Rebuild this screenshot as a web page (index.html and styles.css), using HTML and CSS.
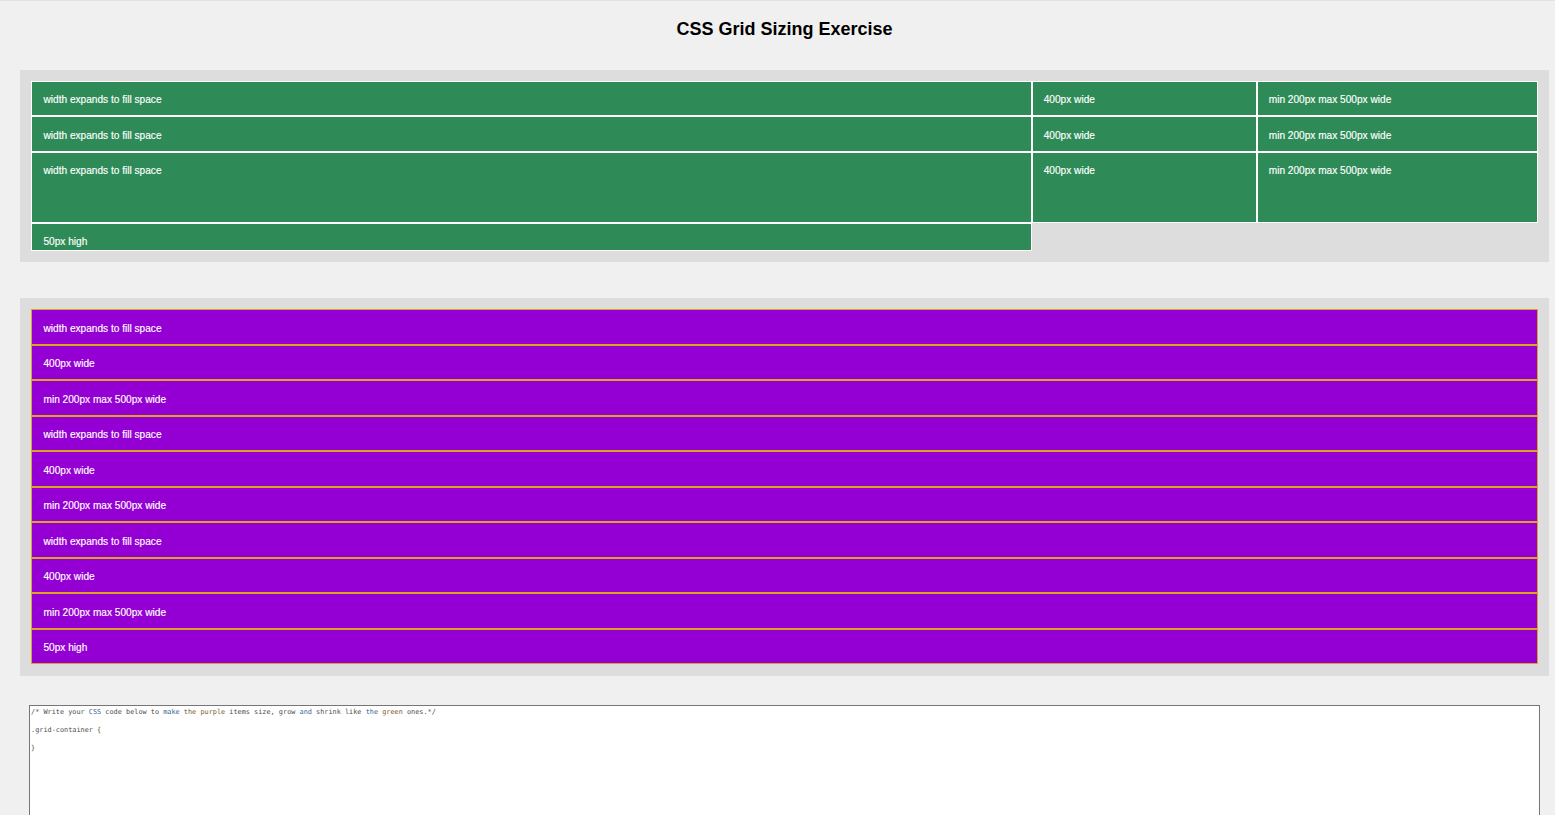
FILE: index.html
```html
<!DOCTYPE html>
<html lang="en">
<head>
<meta charset="utf-8">
<title>CSS Grid Sizing Exercise</title>
<link rel="stylesheet" href="styles.css">
</head>
<body>
<h1 class="title">CSS Grid Sizing Exercise</h1>
<section class="grid grid-green">
  <div class="item">width expands to fill space</div>
  <div class="item">400px wide</div>
  <div class="item">min 200px max 500px wide</div>
  <div class="item">width expands to fill space</div>
  <div class="item">400px wide</div>
  <div class="item">min 200px max 500px wide</div>
  <div class="item">width expands to fill space</div>
  <div class="item">400px wide</div>
  <div class="item">min 200px max 500px wide</div>
  <div class="item">50px high</div>
</section>
<section class="grid grid-purple">
  <div class="item">width expands to fill space</div>
  <div class="item">400px wide</div>
  <div class="item">min 200px max 500px wide</div>
  <div class="item">width expands to fill space</div>
  <div class="item">400px wide</div>
  <div class="item">min 200px max 500px wide</div>
  <div class="item">width expands to fill space</div>
  <div class="item">400px wide</div>
  <div class="item">min 200px max 500px wide</div>
  <div class="item">50px high</div>
</section>
<div class="editor">
  <p class="code"><span class="c-a">/* Write your</span> <span class="c-b">CSS</span> <span class="c-a">code below to</span> <span class="c-b">make</span> <span class="c-c">the purple</span> <span class="c-a">items size, grow</span> <span class="c-b">and</span> <span class="c-a">shrink like</span> <span class="c-b">the</span> <span class="c-c">green</span> <span class="c-a">ones.*/</span></p>
  <p class="code"><span class="c-a">.grid-container</span> <span class="c-c">{</span></p>
  <p class="code"><span class="c-c">}</span></p>
</div>
</body>
</html>
```

FILE: styles.css
```css
* {
  box-sizing: border-box;
}

html,
body {
  height: 100%;
}

body {
  margin: 0;
  overflow: hidden;
  background: #f0f0f0;
  border-top: 1px solid #e2e2e2;
  font-family: "Liberation Sans", Arial, sans-serif;
}

.title {
  margin: 0 6px 0 20px;
  padding-top: 17px;
  height: 68.6px;
  font-size: 18px;
  line-height: 22px;
  font-weight: 700;
  text-align: center;
  color: #000;
}

.grid {
  display: grid;
  margin: 0 6px 0 20px;
  padding: 11.25px;
  background: #ddd;
  font-size: 10.125px;
  line-height: 13px;
  color: #fff;
  -webkit-text-stroke: 0.15px #fff;
}

.grid-green {
  grid-template-columns: 1fr 225px minmax(112.5px, 281.25px);
  grid-template-rows: 35.5px 35.5px 70.8px 28.1px;
  margin-bottom: 36.2px;
}

.grid-purple {
  grid-template-columns: 1fr;
  grid-auto-rows: 35.5px;
}

.item {
  padding: 11.25px;
  border: 1px solid;
}

.grid-green .item {
  background: #2e8b57;
  border-color: #fff;
}

.grid-purple .item {
  background: #9400d3;
  border-color: #daa520;
}

.editor {
  margin: 29.3px 15px 0 29px;
  height: 200px;
  padding: 2px 1px;
  background: #fff;
  border: 1px solid #767676;
  font-family: "DejaVu Sans Mono", monospace;
  font-size: 6.86px;
}

.code {
  margin: 0 0 9px;
  line-height: 9px;
}

.c-a {
  color: #4c4c4c;
}

.c-b {
  color: #3a5f98;
}

.c-c {
  color: #7a5a28;
}
```
